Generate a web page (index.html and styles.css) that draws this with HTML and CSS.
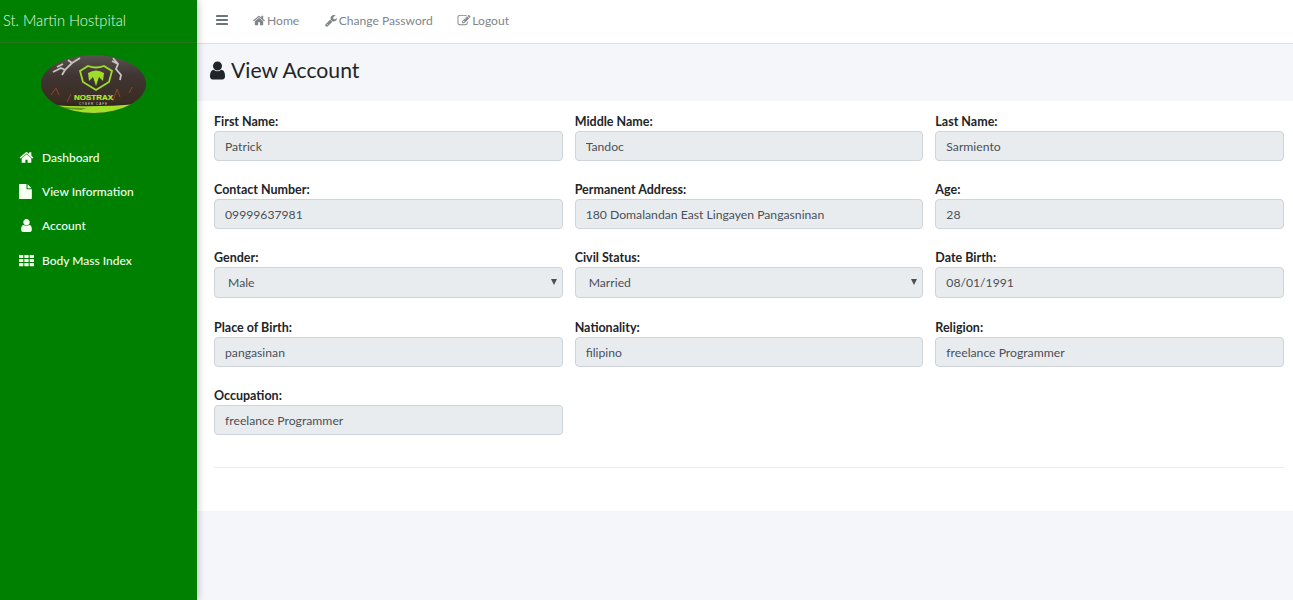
FILE: index.html
```html
<!DOCTYPE html>
<html lang="en">
<head>
<meta charset="utf-8">
<title>View Account</title>
<link rel="stylesheet" href="styles.css">
</head>
<body>
<svg class="defs" xmlns="http://www.w3.org/2000/svg">
  <symbol id="i-home" viewBox="0 0 1792 1792"><path d="M1472 992v480q0 26-19 45t-45 19h-384v-384h-256v384h-384q-26 0-45-19t-19-45v-480q0-1 .5-3t.5-3l575-474 575 474q1 2 1 6zm223-69l-62 74q-8 9-21 11h-3q-13 0-21-7l-692-577-692 577q-12 8-24 7-13-2-21-11l-62-74q-8-10-7-23.500t11-21.500l719-599q32-26 76-26t76 26l244 204v-195q0-14 9-23t23-9h192q14 0 23 9t9 23v408l219 182q10 8 11 21.500t-7 23.500z"/></symbol>
  <symbol id="i-file" viewBox="0 0 1792 1792"><path d="M1024 512v-472q22 14 36 28l408 408q14 14 28 36h-472zm-128 32q0 40 28 68t68 28h544v1056q0 40-28 68t-68 28h-1344q-40 0-68-28t-28-68v-1600q0-40 28-68t68-28h800v544z"/></symbol>
  <symbol id="i-user" viewBox="0 0 1792 1792"><path d="M1536 1399q0 109-62.500 187t-150.500 78h-854q-88 0-150.500-78t-62.500-187q0-85 8.500-160.500t31.500-152 58.500-131 94-89 134.500-34.500q131 128 313 128t313-128q76 0 134.500 34.500t94 89 58.500 131 31.500 152 8.500 160.500zm-256-887q0 159-112.500 271.500t-271.500 112.500-271.500-112.500-112.500-271.500 112.500-271.500 271.500-112.500 271.500 112.500 112.500 271.500z"/></symbol>
  <symbol id="i-th" viewBox="0 0 16 12"><rect x="0" y="0" width="4.600" height="3.400" rx=".5"/><rect x="5.700" y="0" width="4.600" height="3.400" rx=".5"/><rect x="11.400" y="0" width="4.600" height="3.400" rx=".5"/><rect x="0" y="4.300" width="4.600" height="3.400" rx=".5"/><rect x="5.700" y="4.300" width="4.600" height="3.400" rx=".5"/><rect x="11.400" y="4.300" width="4.600" height="3.400" rx=".5"/><rect x="0" y="8.600" width="4.600" height="3.400" rx=".5"/><rect x="5.700" y="8.600" width="4.600" height="3.400" rx=".5"/><rect x="11.400" y="8.600" width="4.600" height="3.400" rx=".5"/></symbol>
  <symbol id="i-bars" viewBox="0 0 12 10"><rect y="0" width="12" height="2" rx=".4"/><rect y="4" width="12" height="2" rx=".4"/><rect y="8" width="12" height="2" rx=".4"/></symbol>
  <symbol id="i-wrench" viewBox="0 0 1792 1792"><path d="M448 1472q0-26-19-45t-45-19-45 19-19 45 19 45 45 19 45-19 19-45zm644-420l-682 682q-37 37-90 37-52 0-91-37l-106-108q-38-36-38-90 0-53 38-91l681-681q39 98 114.500 173.500t173.500 114.500zm634-435q0 39-23 106-47 134-164.500 217.500t-258.500 83.500q-185 0-316.500-131.500t-131.500-316.500 131.500-316.500 316.500-131.500q58 0 121.500 16.500t107.500 46.500q16 11 16 28t-16 28l-293 169v224l193 107q5-3 79-48.500t135.500-81 70.500-35.500q15 0 23.500 10t8.500 25z"/></symbol>
  <symbol id="i-edit" viewBox="0 0 1792 1792"><path d="M888 1184l116-116-152-152-116 116v56h96v96h56zm440-720q-16-16-33 1l-350 350q-17 17-1 33t33-1l350-350q17-17 1-33zm80 594v190q0 119-84.500 203.500t-203.500 84.500h-832q-119 0-203.500-84.500t-84.500-203.500v-832q0-119 84.500-203.500t203.500-84.500h832q63 0 117 25 15 7 18 23 3 17-9 29l-49 49q-14 14-32 8-23-6-45-6h-832q-66 0-113 47t-47 113v832q0 66 47 113t113 47h832q66 0 113-47t47-113v-126q0-13 9-22l64-64q15-15 35-7t20 29zm-96-738l288 288-672 672h-288v-288zm444 132l-92 92-288-288 92-92q28-28 68-28t68 28l152 152q28 28 28 68t-28 68z"/></symbol>
</svg>

<div class="layout">
  <aside class="sidebar">
    <div class="brand">St. Martin Hostpital</div>
    <div class="logo-wrap">
      <svg class="logo" viewBox="0 0 105 58" xmlns="http://www.w3.org/2000/svg">
        <defs>
          <clipPath id="oval"><ellipse cx="52.500" cy="29" rx="52.500" ry="29"/></clipPath>
          <linearGradient id="smoke" x1="0" y1="0" x2="0" y2="1">
            <stop offset="0" stop-color="#5a5350"/>
            <stop offset=".35" stop-color="#3f3533"/>
            <stop offset=".8" stop-color="#3a2c22"/>
            <stop offset="1" stop-color="#1e1a14"/>
          </linearGradient>
          <filter id="soft" x="-5%" y="-5%" width="110%" height="110%"><feGaussianBlur stdDeviation=".5"/></filter>
        </defs>
        <g clip-path="url(#oval)">
          <rect width="105" height="58" fill="url(#smoke)"/>
          <g filter="url(#soft)">
            <path d="M12 17 L20 13 L24 15 L31 8 L39 3 M24 15 L21 20 M31 8 L27 5 M16 12 L22 9" fill="none" stroke="#c9c4be" stroke-width="1.800"/>
            <path d="M72 3 L77 9 L75 14 L80 20 L79 25 M77 9 L71 6" fill="none" stroke="#c9c4be" stroke-width="1.800"/>
            <path d="M10 40 L15 33 L18 40 M26 47 L30 39 M72 46 L76 34 L79 42 M88 38 L91 32" fill="none" stroke="#8a4a26" stroke-width="1"/>
            <path d="M8 50 Q52 53 98 49 V58 H8 Z" fill="#a4e02c"/>
            <path d="M14 51 Q30 53 46 53 L40 55 Q26 54 14 53 Z" fill="#6a9a26"/>
          </g>
          <path d="M39 16 L47 11 Q55 14 63 11 L71 16 L68 27 L55 35 L42 27 Z" fill="none" stroke="#a0dc2a" stroke-width="1.800"/>
          <path d="M47 18 Q55 13 63 18 L62 26 L58 22 L55 31 L52 22 L48 26 Z" fill="#a0dc2a"/>
          <text class="logo-title" x="52.500" y="45" text-anchor="middle">NOSTRAX</text>
          <text class="logo-sub" x="52.500" y="49.500" text-anchor="middle">CYBER CAFE</text>
        </g>
      </svg>
    </div>
    <nav class="side-nav">
      <a class="side-link"><svg class="side-icon"><use href="#i-home"/></svg><span>Dashboard</span></a>
      <a class="side-link"><svg class="side-icon"><use href="#i-file"/></svg><span>View Information</span></a>
      <a class="side-link"><svg class="side-icon"><use href="#i-user"/></svg><span>Account</span></a>
      <a class="side-link"><svg class="side-icon"><use href="#i-th"/></svg><span>Body Mass Index</span></a>
    </nav>
  </aside>

  <div class="main">
    <header class="topbar">
      <a class="top-link top-toggle"><svg class="bars-icon"><use href="#i-bars"/></svg></a>
      <a class="top-link"><svg class="top-icon"><use href="#i-home"/></svg>Home</a>
      <a class="top-link"><svg class="top-icon"><use href="#i-wrench"/></svg>Change Password</a>
      <a class="top-link"><svg class="top-icon"><use href="#i-edit"/></svg>Logout</a>
    </header>

    <div class="page-head">
      <h1 class="page-title"><svg class="title-icon"><use href="#i-user"/></svg>View Account</h1>
    </div>

    <section class="card">
      <form class="form-grid">
        <div class="field"><label>First Name:</label><input class="control" value="Patrick" readonly></div>
        <div class="field"><label>Middle Name:</label><input class="control" value="Tandoc" readonly></div>
        <div class="field"><label>Last Name:</label><input class="control" value="Sarmiento" readonly></div>

        <div class="field"><label>Contact Number:</label><input class="control" value="09999637981" readonly></div>
        <div class="field"><label>Permanent Address:</label><input class="control" value="180 Domalandan East Lingayen Pangasninan" readonly></div>
        <div class="field"><label>Age:</label><input class="control" value="28" readonly></div>

        <div class="field field-tall"><label>Gender:</label><div class="select-wrap"><select class="control control-select" disabled><option>Male</option></select></div></div>
        <div class="field field-tall"><label>Civil Status:</label><div class="select-wrap"><select class="control control-select" disabled><option>Married</option></select></div></div>
        <div class="field field-tall"><label>Date Birth:</label><input class="control control-tall" value="08/01/1991" readonly></div>

        <div class="field"><label>Place of Birth:</label><input class="control" value="pangasinan" readonly></div>
        <div class="field"><label>Nationality:</label><input class="control" value="filipino" readonly></div>
        <div class="field"><label>Religion:</label><input class="control" value="freelance Programmer" readonly></div>

        <div class="field"><label>Occupation:</label><input class="control" value="freelance Programmer" readonly></div>
      </form>
      <hr class="rule">
    </section>
  </div>
</div>
</body>
</html>
```

FILE: styles.css
```css
* { box-sizing: border-box; }
html, body { margin: 0; height: 100%; overflow: hidden; }
body {
  font-family: "Lato", "Liberation Sans", sans-serif;
  font-size: 13px;
  color: #212529;
  background: #f4f6f9;
}
.defs { display: none; }
.layout { display: flex; height: 600px; }

.sidebar {
  width: 197px;
  flex: none;
  background: #008000;
  color: #fff;
  box-shadow: 0 0 8px rgba(0, 0, 0, .3);
  position: relative;
  z-index: 2;
}
.brand {
  height: 43px;
  padding: 11px 0 0 3px;
  font-size: 14.700px;
  line-height: 18px;
  font-weight: 300;
  color: #e0f7e4;
  border-bottom: 1px solid #1f7a1f;
}
.logo-wrap { display: flex; padding: 12px 0 0 41px; }
.logo { width: 105px; height: 58px; display: block; }
.logo-title { font-family: "Liberation Sans", sans-serif; font-size: 8px; font-weight: 700; fill: #b4ec30; stroke: #b4ec30; stroke-width: .2px; }
.logo-sub { font-family: "Liberation Sans", sans-serif; font-size: 3px; letter-spacing: 1px; fill: #d8d8c8; }

.side-nav { display: flex; flex-direction: column; padding-top: 27px; }
.side-link {
  display: flex;
  align-items: center;
  height: 34.400px;
  padding-left: 19px;
  color: #f2fff2;
  font-size: 12px;
  font-weight: 500;
}
.side-icon { width: 15px; height: 15px; fill: #f6fff0; flex: none; margin-right: 8px; }

.main { flex: 1; min-width: 0; }
.topbar {
  height: 44px;
  background: #fff;
  border-bottom: 1px solid #dee2e6;
  display: flex;
  align-items: center;
  padding: 0 0 3px 19px;
  gap: 24.500px;
}
.top-link { display: flex; align-items: center; color: #7f8589; font-size: 12.100px; }
.top-toggle { margin-right: -.5px; }
.bars-icon { width: 12px; height: 10px; fill: #6c757d; }
.top-icon { width: 14px; height: 13px; fill: #7f8589; margin-right: 1px; }

.page-head { height: 57px; display: flex; align-items: center; padding: 0 0 5px 10px; }
.page-title { margin: 0; font-size: 21.200px; font-weight: 400; color: #212529; display: flex; align-items: center; line-height: 26px; }
.title-icon { width: 21px; height: 21px; fill: #212529; margin-right: 3px; }

.card { background: #fff; height: 410px; padding: 13px 9px 0 17px; }
.form-grid { display: grid; grid-template-columns: repeat(3, 1fr); column-gap: 12px; }
.field { display: flex; flex-direction: column; margin-bottom: 21px; }
.field-tall { margin-bottom: 22px; }
.field label { font-weight: 700; font-size: 12.500px; line-height: 15px; margin-bottom: 2px; color: #212529; }
.control {
  display: block;
  height: 30px;
  width: 100%;
  padding: 0 10px;
  background: #e9ecef;
  border: 1px solid #ced4da;
  border-radius: 4px;
  color: #495057;
  font-family: inherit;
  font-size: 12.200px;
  outline: none;
}
.select-wrap { position: relative; }
.select-wrap::after {
  content: "";
  position: absolute;
  right: 6px;
  top: 12px;
  border-style: solid;
  border-width: 6px 3px 0;
  border-color: #4a4f55 transparent transparent;
}
.control-select { height: 31px; opacity: 1; padding-left: 13px; appearance: none; }
.control-tall { height: 31px; }
.rule { border: 0; border-top: 1px solid #e9ecef; margin: 11px 0 0; }
```
